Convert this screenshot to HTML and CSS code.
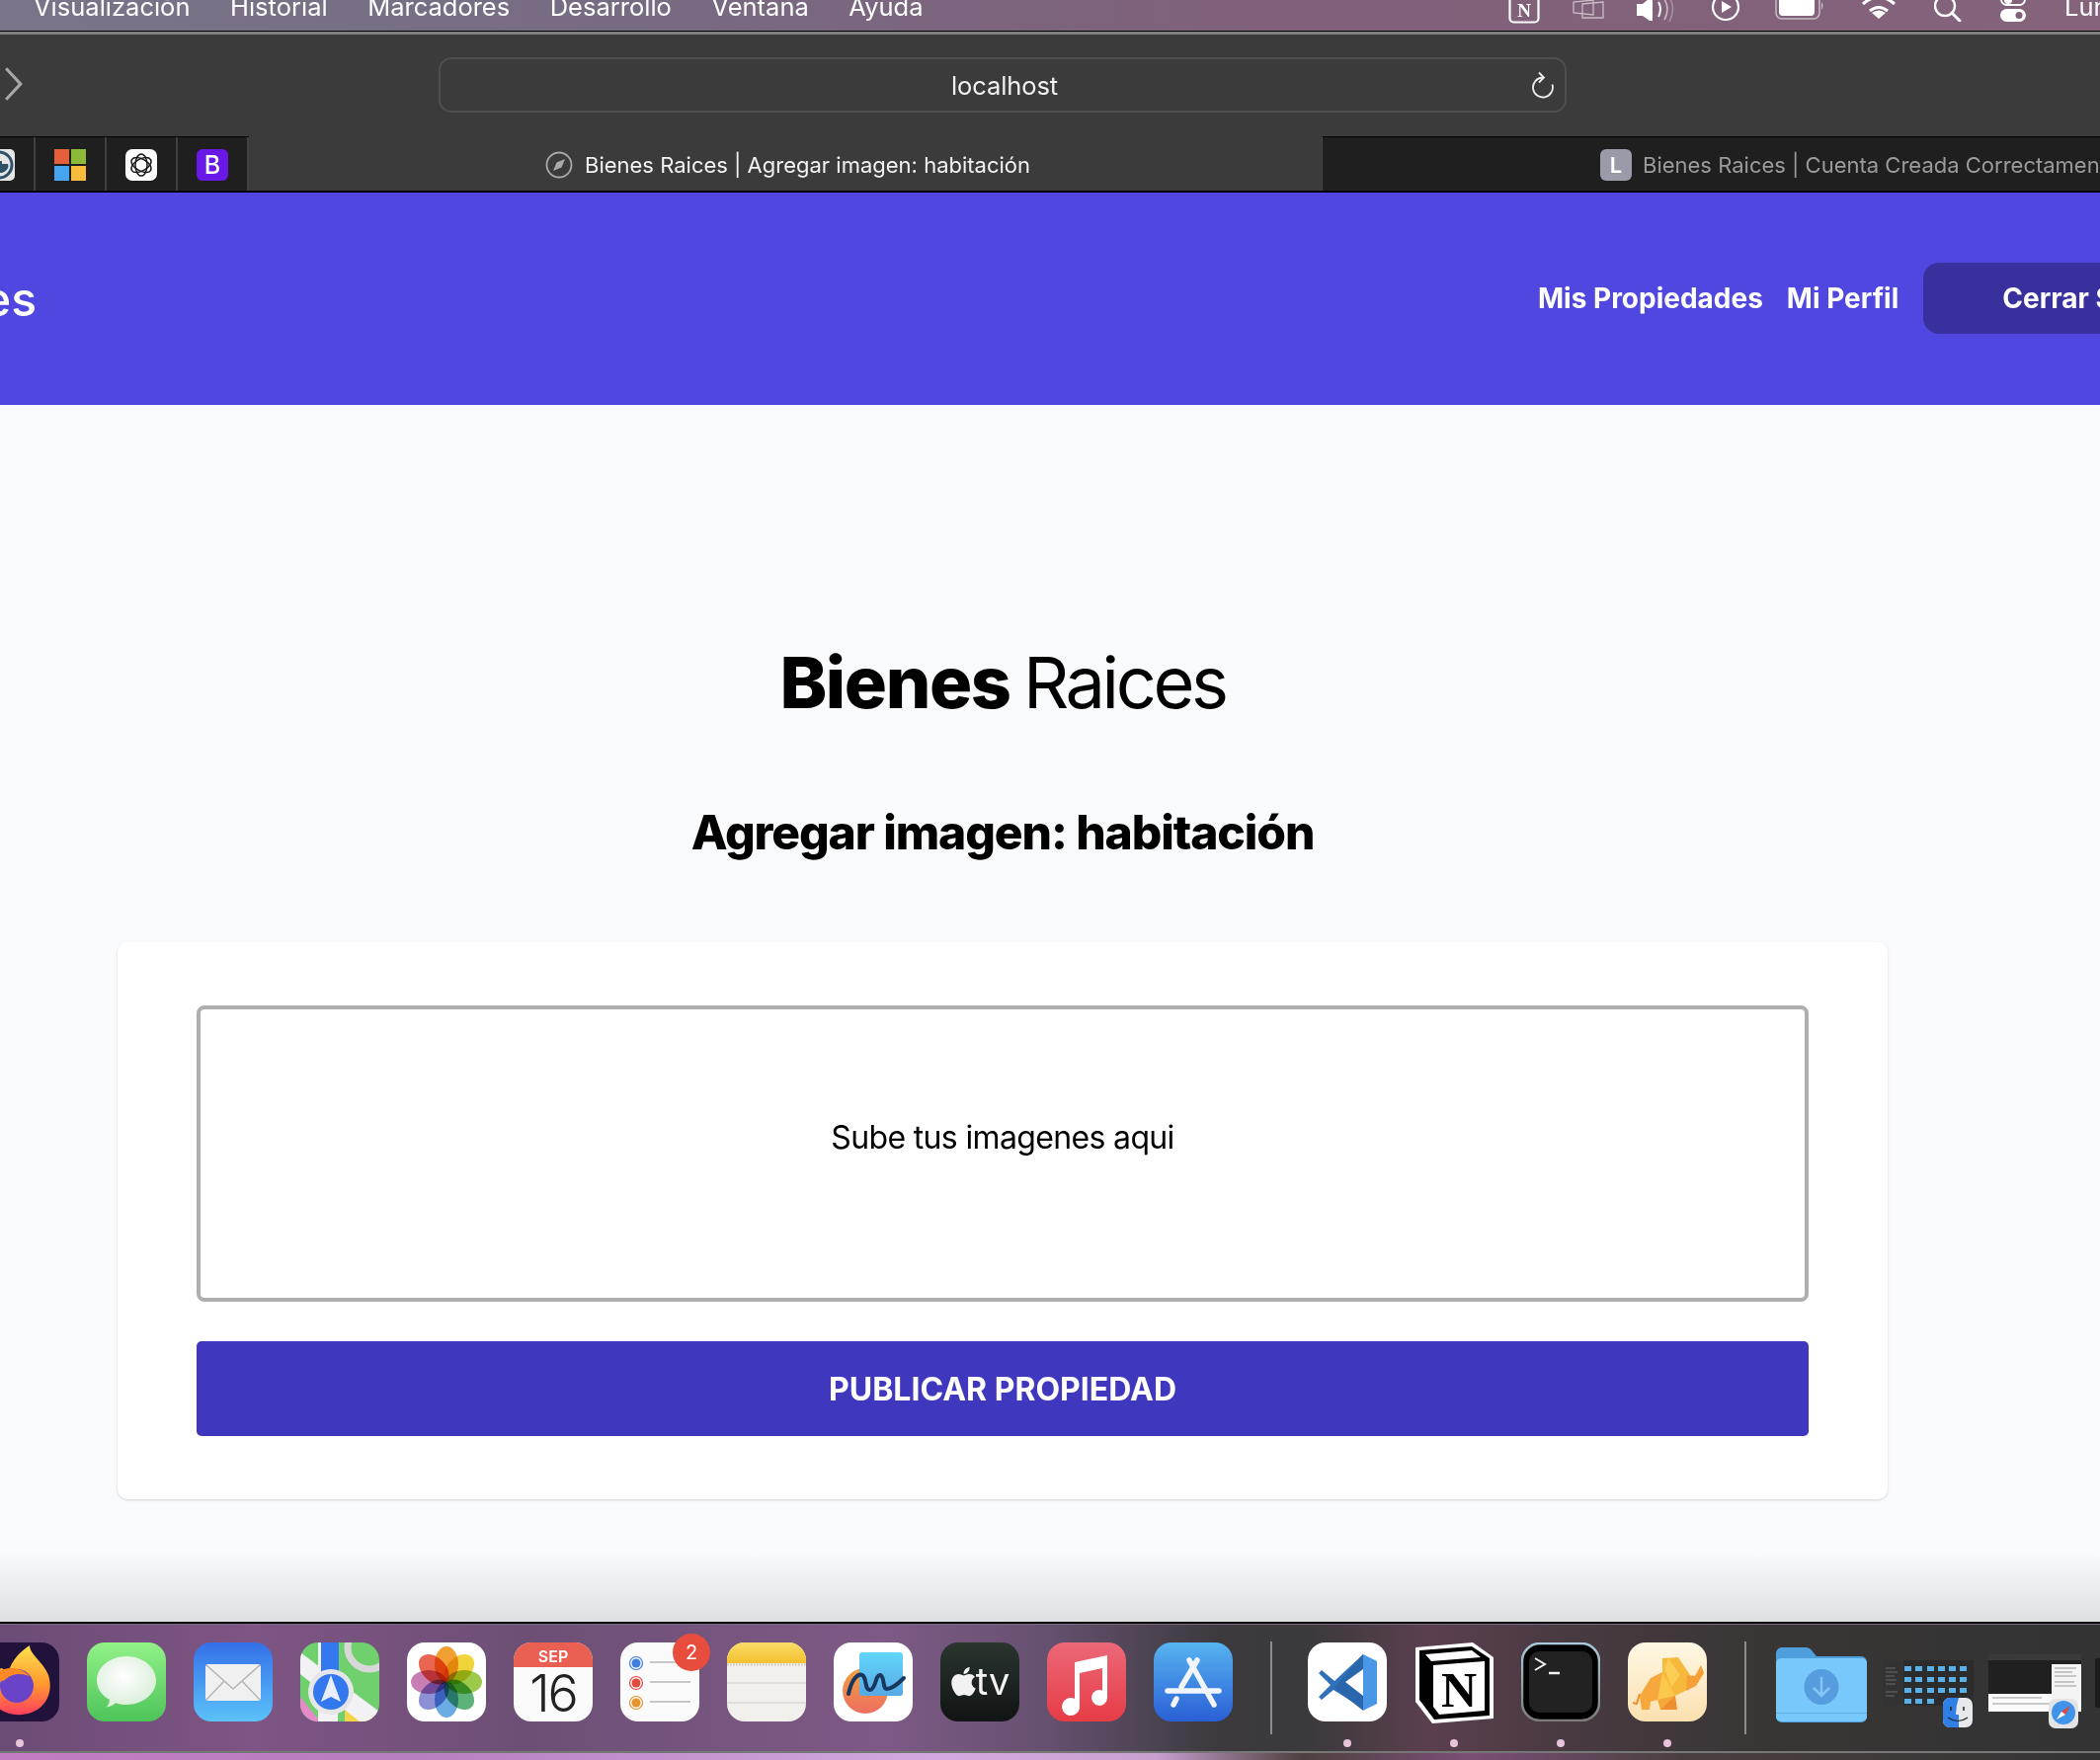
FILE: index.html
```html
<!DOCTYPE html>
<html lang="es">
<head>
<meta charset="utf-8">
<title>Bienes Raices | Agregar imagen: habitación</title>
<link rel="stylesheet" href="styles.css">
</head>
<body>
<div class="screen">
  <div class="menubar">
    <nav class="menu-left">
      <span>Visualización</span><span>Historial</span><span>Marcadores</span><span>Desarrollo</span><span>Ventana</span><span>Ayuda</span>
    </nav>
    <div class="menu-right">
      <svg class="mi mi-n" viewBox="0 0 32 24"><rect x="1.5" y="-8" width="29" height="30.500" rx="4" fill="none" stroke="#fff" stroke-width="2.200"/><text x="16" y="17" text-anchor="middle" class="mi-n-text">N</text></svg>
      <svg class="mi mi-win" viewBox="0 0 32 20"><g fill="none" stroke="#c9bcc5" stroke-width="1.300"><path d="M1 2v11l20 2V0z"/><path d="M10 4l21-2v16l-21 0z"/></g></svg>
      <svg class="mi mi-vol" viewBox="0 0 40 22"><path d="M1 4h6l7-6h3v23h-3l-7-5H1z" fill="#fff"/><path d="M23 2q4 7 0 15" fill="none" stroke="#fff" stroke-width="2"/><path d="M29-1q6 10 0 21" fill="none" stroke="#c9bcc5" stroke-width="1.600"/><path d="M34-3q7 12 0 25" fill="none" stroke="#a68fa0" stroke-width="1.600"/></svg>
      <svg class="mi mi-play" viewBox="0 0 30 22"><circle cx="15" cy="7" r="13" fill="none" stroke="#fff" stroke-width="2.200"/><path d="M11 1l10 6-10 6z" fill="#fff"/></svg>
      <svg class="mi mi-bat" viewBox="0 0 50 20"><rect x="1" y="-8" width="44" height="27" rx="6" fill="none" stroke="#c9bcc5" stroke-width="1.500"/><rect x="4" y="-6" width="36" height="22" rx="4" fill="#fff"/><path d="M47 2q3 4 0 8z" fill="#c9bcc5"/></svg>
      <svg class="mi mi-wifi" viewBox="0 0 34 20"><path d="M1 4q16-14 32 0M8 11q9-7 18 0" fill="none" stroke="#fff" stroke-width="3"/><path d="M17 19l-7-6q7-5 14 0z" fill="#fff"/></svg>
      <svg class="mi mi-search" viewBox="0 0 28 22"><circle cx="11" cy="6" r="10" fill="none" stroke="#fff" stroke-width="2.400"/><path d="M18 13l8 8" stroke="#fff" stroke-width="3" stroke-linecap="round"/></svg>
      <svg class="mi mi-ctl" viewBox="0 0 28 22"><rect x="2" y="-6" width="24" height="11" rx="5.500" fill="none" stroke="#fff" stroke-width="2"/><circle cx="9" cy="0" r="4" fill="#fff"/><rect x="1" y="9" width="26" height="13" rx="6.500" fill="#fff"/><circle cx="20" cy="15.500" r="3.500" fill="#806079"/></svg>
      <span class="menu-clock">Lun</span>
    </div>
  </div>

  <div class="toolbar">
    <svg class="chevron" viewBox="0 0 16 30"><path d="M1 1l13 14L1 29" fill="none" stroke="#a8a8a8" stroke-width="2.800"/></svg>
    <div class="address">
      <span class="address-text">localhost</span>
      <svg class="reload" viewBox="0 0 24 28"><path d="M12 6.500A10 10 0 1 0 21.500 13.500" fill="none" stroke="#ededed" stroke-width="1.800"/><path d="M8 1.500l5 5-5 5" fill="none" stroke="#ededed" stroke-width="1.800"/></svg>
    </div>
  </div>

  <div class="tabs">
    <div class="pinned">
      <div class="pin pin-first">
        <svg class="fav" viewBox="0 0 32 32"><rect width="32" height="32" rx="5" fill="#e6e6e6"/><circle cx="16" cy="16" r="13" fill="none" stroke="#2f5168" stroke-width="3"/><path d="M5 15h20q2 6-6 9H9q-4-3-4-9z" fill="#2f5168"/><path d="M9 12h10v3H9z" fill="#2f5168"/></svg>
      </div>
      <div class="pin">
        <svg class="fav" viewBox="0 0 32 32"><rect width="15" height="15" fill="#e4603a"/><rect x="17" width="15" height="15" fill="#8cba38"/><rect y="17" width="15" height="15" fill="#46a5ee"/><rect x="17" y="17" width="15" height="15" fill="#f8bc3c"/></svg>
      </div>
      <div class="pin">
        <svg class="fav" viewBox="0 0 32 32"><rect width="32" height="32" rx="7" fill="#fff"/><g fill="none" stroke="#1c1c1c" stroke-width="1.500"><ellipse cx="16" cy="16" rx="6" ry="11"/><ellipse cx="16" cy="16" rx="6" ry="11" transform="rotate(60 16 16)"/><ellipse cx="16" cy="16" rx="6" ry="11" transform="rotate(120 16 16)"/></g></svg>
      </div>
      <div class="pin">
        <svg class="fav" viewBox="0 0 32 32"><rect width="32" height="32" rx="6" fill="#6a18e8"/><text x="16" y="25" text-anchor="middle" class="fav-b">B</text></svg>
      </div>
    </div>
    <div class="tab tab-active">
      <svg class="compass" viewBox="0 0 28 28"><circle cx="14" cy="14" r="12.500" fill="none" stroke="#a9a9a9" stroke-width="1.800"/><path d="M20 8l-3.500 8.500L8 20l3.500-8.500z" fill="#a9a9a9"/></svg>
      <span>Bienes Raices | Agregar imagen: habitación</span>
    </div>
    <div class="tab tab-other">
      <span class="tab-letter">L</span>
      <span class="tab-other-title">Bienes Raices | Cuenta Creada Correctamente</span>
    </div>
  </div>

  <header class="site-header">
    <div class="logo"><a>Bienes Raices</a></div>
    <nav class="site-nav">
      <a>Mis Propiedades</a>
      <a>Mi Perfil</a>
      <button class="logout" type="button">Cerrar Sesión</button>
    </nav>
  </header>

  <main class="page">
    <h1 class="brand"><strong>Bienes</strong> <span class="brand-light">Raices</span></h1>
    <h2 class="subtitle">Agregar imagen: habitación</h2>
    <section class="card">
      <div class="dropzone"><p>Sube tus imagenes aqui</p></div>
      <button class="publish" type="button">PUBLICAR PROPIEDAD</button>
    </section>
  </main>

  <footer class="dock">
    <div class="dock-item running">
      <svg class="icon" viewBox="0 0 80 80"><defs><linearGradient id="ffo" x1="0" y1="0" x2="0" y2="1"><stop offset="0" stop-color="#ffe14d"/><stop offset=".55" stop-color="#ff9a2e"/><stop offset="1" stop-color="#ff3f5e"/></linearGradient></defs><rect width="80" height="80" rx="18" fill="#20123a"/><path d="M50 3c0 9 14 17 19 30 6 19-4 38-27 40C22 75 6 60 4 42c4-9 10-14 18-16l6 5C33 16 40 10 50 3z" fill="url(#ffo)"/><circle cx="37" cy="44" r="17" fill="#6a44c8"/><path d="M22 28c9-4 20-2 28 6-8-3-18-3-24 3-3 3-8 2-14 4 1-6 5-11 10-13z" fill="#ff8a23"/></svg>
    </div>
    <div class="dock-item">
      <svg class="icon" viewBox="0 0 80 80"><defs><linearGradient id="msg" x1="0" y1="0" x2="0" y2="1"><stop offset="0" stop-color="#92f288"/><stop offset="1" stop-color="#4dc45a"/></linearGradient><radialGradient id="msgb" cx=".45" cy=".4" r=".7"><stop offset="0" stop-color="#fff"/><stop offset="1" stop-color="#d4ecd4"/></radialGradient></defs><rect width="80" height="80" rx="18" fill="url(#msg)"/><path d="M40 14c16.500 0 30 11 30 24.500S56.500 63 40 63c-4 0-8-.6-11-1.800-3 2.500-6 4-9.500 4.300 2-2 3.200-4.500 3.500-7.800C15 54 10 46.500 10 38.500 10 25 23.500 14 40 14z" fill="url(#msgb)"/></svg>
    </div>
    <div class="dock-item">
      <svg class="icon" viewBox="0 0 80 80"><defs><linearGradient id="mail" x1="0" y1="0" x2="0" y2="1"><stop offset="0" stop-color="#3470e8"/><stop offset="1" stop-color="#5cc2fa"/></linearGradient></defs><rect width="80" height="80" rx="18" fill="url(#mail)"/><rect x="12" y="22" width="56" height="37" rx="3" fill="#f0f0f0"/><path d="M13 23l27 24 27-24M13 58l18-19M67 58L49 39" fill="none" stroke="#b5b5b5" stroke-width="1.500"/></svg>
    </div>
    <div class="dock-item">
      <svg class="icon" viewBox="0 0 80 80"><defs><clipPath id="mapc"><rect width="80" height="80" rx="18"/></clipPath></defs><g clip-path="url(#mapc)"><rect width="80" height="80" fill="#6fd06d"/><path d="M0 80V55l20 25z" fill="#e68ac8"/><path d="M45 80V60l35 20z" fill="#f6d44a"/><path d="M0 10l80 60v10H60L0 32z" fill="#f2f2f4"/><rect x="18" width="20" height="80" fill="#f2f2f4"/><rect x="21" width="18" height="35" fill="#3478f0"/><circle cx="70" cy="5" r="22" fill="none" stroke="#d8d8d8" stroke-width="7"/><circle cx="31" cy="50" r="23" fill="#e6e6ea"/><circle cx="31" cy="50" r="18" fill="#3478f0"/><path d="M31 33l10 27-10-5-10 5z" fill="#e8eefc"/></g></svg>
    </div>
    <div class="dock-item">
      <svg class="icon" viewBox="0 0 80 80"><rect width="80" height="80" rx="18" fill="#fff"/><g class="petals" transform="translate(40 40)"><ellipse rx="12" ry="18" cy="-18" fill="#f2a033"/><ellipse rx="12" ry="18" cy="-18" fill="#f0d53a" transform="rotate(45)"/><ellipse rx="12" ry="18" cy="-18" fill="#9cc94a" transform="rotate(90)"/><ellipse rx="12" ry="18" cy="-18" fill="#5cb278" transform="rotate(135)"/><ellipse rx="12" ry="18" cy="-18" fill="#6cacE4" transform="rotate(180)"/><ellipse rx="12" ry="18" cy="-18" fill="#8d90d4" transform="rotate(225)"/><ellipse rx="12" ry="18" cy="-18" fill="#c87eb2" transform="rotate(270)"/><ellipse rx="12" ry="18" cy="-18" fill="#ea6650" transform="rotate(315)"/></g></svg>
    </div>
    <div class="dock-item">
      <svg class="icon" viewBox="0 0 80 80"><defs><clipPath id="calc"><rect width="80" height="80" rx="18"/></clipPath></defs><g clip-path="url(#calc)"><rect width="80" height="80" fill="#fafafa"/><rect width="80" height="25" fill="#e95f52"/></g><text x="40" y="20" text-anchor="middle" class="cal-mon">SEP</text><text x="40" y="70" text-anchor="middle" class="cal-day">16</text></svg>
    </div>
    <div class="dock-item">
      <svg class="icon overflow" viewBox="0 0 80 80"><rect width="80" height="80" rx="18" fill="#fafafa"/><g fill="none" stroke-width="1.200"><circle cx="16" cy="21" r="6.500" stroke="#3f7ee0"/><circle cx="16" cy="41" r="6.500" stroke="#e24a3f"/><circle cx="16" cy="61" r="6.500" stroke="#e8942e"/></g><circle cx="16" cy="21" r="4.500" fill="#3f7ee0"/><circle cx="16" cy="41" r="4.500" fill="#e24a3f"/><circle cx="16" cy="61" r="4.500" fill="#e8942e"/><path d="M30 20h41M30 40h41M30 60h41" stroke="#c8c8c8" stroke-width="2"/><circle cx="72" cy="10" r="19" fill="#e84c3d"/><text x="72" y="17" text-anchor="middle" class="badge-num">2</text></svg>
    </div>
    <div class="dock-item">
      <svg class="icon" viewBox="0 0 80 80"><defs><clipPath id="notec"><rect width="80" height="80" rx="18"/></clipPath><linearGradient id="notey" x1="0" y1="0" x2="0" y2="1"><stop offset="0" stop-color="#fadc68"/><stop offset="1" stop-color="#f4c12e"/></linearGradient></defs><g clip-path="url(#notec)"><rect width="80" height="80" fill="#f2f0ec"/><rect width="80" height="21" fill="url(#notey)"/><path d="M0 22.500h80" stroke="#c4c4c0" stroke-width="2" stroke-dasharray="1.500 1.500"/><path d="M0 41h80M0 61h80" stroke="#d8d6d4" stroke-width="1.500"/></g></svg>
    </div>
    <div class="dock-item">
      <svg class="icon" viewBox="0 0 80 80"><defs><linearGradient id="ffred" x1="0" y1="0" x2="0" y2="1"><stop offset="0" stop-color="#f0a040"/><stop offset="1" stop-color="#ee6e60"/></linearGradient><linearGradient id="ffblu" x1="0" y1="0" x2="0" y2="1"><stop offset="0" stop-color="#62d6fa"/><stop offset="1" stop-color="#58a8e4"/></linearGradient></defs><rect width="80" height="80" rx="18" fill="#fff"/><ellipse cx="32" cy="49" rx="23" ry="23" fill="url(#ffred)"/><rect x="26" y="10" width="44" height="44" rx="3" fill="url(#ffblu)"/><path d="M15 52C18 38 24 31 29 33c5 3 2 16 8 15 6-1 5-15 10-15 5 1 2 14 7 14 5 0 11-5 17-11" fill="none" stroke="#18375e" stroke-width="4" stroke-linecap="round"/></svg>
    </div>
    <div class="dock-item">
      <svg class="icon" viewBox="0 0 80 80"><defs><linearGradient id="tvg" x1="0" y1="0" x2="0" y2="1"><stop offset="0" stop-color="#2a352f"/><stop offset="1" stop-color="#101414"/></linearGradient></defs><rect width="80" height="80" rx="18" fill="url(#tvg)"/><path transform="translate(11 23) scale(.065)" fill="#f2f2f2" d="M318.7 268.700c-.2-36.700 16.400-64.400 50-84.800-18.800-26.900-47.200-41.700-84.700-44.600-35.500-2.800-74.300 20.700-88.500 20.700-15 0-49.400-19.700-76.400-19.700C63.300 141.200 4 184.800 4 273.500q0 39.300 14.400 81.200c12.800 36.700 59 126.700 107.200 125.200 25.200-.6 43-17.900 75.800-17.900 31.800 0 48.300 17.900 76.400 17.900 48.600-.7 90.400-82.500 102.600-119.300-65.200-30.700-61.700-90-61.700-91.900zm-56.600-164.200c27.300-32.400 24.800-61.900 24-72.500-24.100 1.400-52 16.400-67.900 34.900-17.500 19.800-27.800 44.300-25.600 71.900 26.100 2 49.900-11.400 69.500-34.300z"/><text x="53" y="53" text-anchor="middle" class="tv-text">tv</text></svg>
    </div>
    <div class="dock-item">
      <svg class="icon" viewBox="0 0 80 80"><defs><linearGradient id="mus" x1="0" y1="0" x2="0" y2="1"><stop offset="0" stop-color="#ec6878"/><stop offset="1" stop-color="#e63c46"/></linearGradient></defs><rect width="80" height="80" rx="18" fill="url(#mus)"/><path d="M28 20l33-7v43a8 8 0 1 1-5-7.500V26l-23 5v34a9 9 0 1 1-5-8z" fill="#fff"/></svg>
    </div>
    <div class="dock-item">
      <svg class="icon" viewBox="0 0 80 80"><defs><linearGradient id="app" x1="0" y1="0" x2="0" y2="1"><stop offset="0" stop-color="#56b4f0"/><stop offset="1" stop-color="#2a5fd6"/></linearGradient></defs><rect width="80" height="80" rx="18" fill="url(#app)"/><g fill="none" stroke="#f2f6fc" stroke-width="5.500" stroke-linecap="round"><path d="M36 18l25 45"/><path d="M44 18L28 45"/><path d="M14 49h52"/><path d="M20 63l3-6"/></g></svg>
    </div>
    <div class="dock-sep"></div>
    <div class="dock-item running">
      <svg class="icon" viewBox="0 0 80 80"><rect width="80" height="80" rx="18" fill="#fff"/><path d="M56 12l14 7v43l-14 7z" fill="#4a97e8"/><path d="M56 12L27 39 14 28l-3 3 12 12-12 12 3 3 12-10 30 19z" fill="#2f70b8"/><path d="M56 12v57L27 46l5-6z" fill="#2a66ac"/><path d="M56 27v27L38 40z" fill="#fff"/></svg>
    </div>
    <div class="dock-item running">
      <svg class="icon overflow" viewBox="0 0 80 80"><path d="M1 5L59 0l21 15v62l-62 5L1 60z" fill="#fff"/><path d="M5 8L58 4l18 12v58l-56 4L5 58z" fill="#000"/><path d="M11 12L58 8l9 7-50 4z" fill="#fff"/><path d="M19 23l52-4v50l-46 4-6-8z" fill="#fff"/><text x="45" y="65" text-anchor="middle" class="notion-n">N</text></svg>
    </div>
    <div class="dock-item running">
      <svg class="icon" viewBox="0 0 80 80"><defs><linearGradient id="termf" x1="0" y1="0" x2="0" y2="1"><stop offset="0" stop-color="#a9cbdc"/><stop offset="1" stop-color="#7c7c7c"/></linearGradient></defs><rect x="1" y="1" width="78" height="78" rx="18" fill="#000" stroke="url(#termf)" stroke-width="2.500"/><rect x="8" y="9" width="64" height="62" rx="10" fill="#222"/><path d="M14 16l10 6-10 6" fill="none" stroke="#f2f2f2" stroke-width="2"/><path d="M28 31h11" stroke="#f2f2f2" stroke-width="2.500"/></svg>
    </div>
    <div class="dock-item running">
      <svg class="icon" viewBox="0 0 80 80"><defs><linearGradient id="ele" x1="0" y1="0" x2="0" y2="1"><stop offset="0" stop-color="#fef8e4"/><stop offset="1" stop-color="#fbe0b0"/></linearGradient></defs><rect width="80" height="80" rx="18" fill="url(#ele)"/><path d="M35 16l16-1 12 18-3 15-12 6-13-18z" fill="#f7b93c"/><path d="M60 33l8 1 6-11 3 8-8 13-10 5z" fill="#f59f36"/><path d="M23 36l12-6 13 24-3 14H33l-3-10-7 2-1 8h-8l-2-14z" fill="#f6a83c"/><path d="M35 30l13 24-18 4z" fill="#fbc84e"/><path d="M41 16l12 17-9 12-7-19z" fill="#fbcd55"/><path d="M33 68l15-14 2 14z" fill="#ee8e2c"/><path d="M12 52l-3 10-4-1" fill="none" stroke="#ee8e2c" stroke-width="2"/></svg>
    </div>
    <div class="dock-sep"></div>
    <div class="dock-item dock-folder">
      <svg class="folder" viewBox="0 0 92 78"><path d="M0 8a6 6 0 0 1 6-6h24q4 0 6 3l5 6h45a6 6 0 0 1 6 6v55a6 6 0 0 1-6 6H6a6 6 0 0 1-6-6z" fill="#4e9fdc"/><rect y="13" width="92" height="64" rx="5" fill="#79c8fb"/><rect y="68" width="92" height="1" fill="#62aee4"/><ellipse cx="46" cy="42" rx="17.500" ry="18" fill="#559dde"/><path d="M46 32v19M38 43l8 8 8-8" fill="none" stroke="#86c6f5" stroke-width="2.500"/></svg>
    </div>
    <div class="dock-stack stack-finder">
      <svg class="thumb" viewBox="0 0 92 46"><rect width="92" height="46" fill="#2c2c2c"/><rect width="21" height="46" fill="#333"/><path d="M3 8h10M3 12h12M3 16h9M3 20h11M3 24h10M3 32h12M3 36h9" stroke="#6a6a6a" stroke-width="1"/><g fill="#5ab0e8"><rect x="22" y="6" width="7" height="5"/><rect x="33" y="6" width="7" height="5"/><rect x="45" y="6" width="7" height="5"/><rect x="56" y="6" width="7" height="5"/><rect x="67" y="6" width="7" height="5"/><rect x="78" y="6" width="7" height="5"/><rect x="22" y="17" width="7" height="5"/><rect x="33" y="17" width="7" height="5"/><rect x="45" y="17" width="7" height="5"/><rect x="56" y="17" width="7" height="5"/><rect x="67" y="17" width="7" height="5"/><rect x="78" y="17" width="7" height="5"/><rect x="22" y="28" width="7" height="5"/><rect x="33" y="28" width="7" height="5"/><rect x="45" y="28" width="7" height="5"/><rect x="56" y="28" width="7" height="5"/><rect x="67" y="28" width="7" height="5"/><rect x="78" y="28" width="7" height="5"/><rect x="22" y="39" width="7" height="5"/><rect x="33" y="39" width="7" height="5"/><rect x="45" y="39" width="7" height="5"/></g></svg>
      <svg class="stack-badge badge-finder" viewBox="0 0 30 30"><rect width="30" height="30" rx="7" fill="#e6e8ec"/><path d="M7 0h9q-3 8-3 17h3v13H7a7 7 0 0 1-7-7V7a7 7 0 0 1 7-7z" fill="#2f7fe6"/><path d="M8 9v4M21 9v4" stroke="#222" stroke-width="1.500"/><path d="M5 20q10 7 20 0" fill="none" stroke="#222" stroke-width="1.200"/></svg>
    </div>
    <div class="dock-stack stack-safari">
      <svg class="thumb" viewBox="0 0 94 58"><rect width="94" height="58" fill="#fafafa"/><rect width="94" height="40" fill="#202020"/><rect width="94" height="6" fill="#3a3a3a"/><rect x="64" y="10" width="30" height="38" fill="#f4f4f4"/><path d="M67 14h22M67 18h18M67 22h22M67 28h20M67 32h22M4 44h50M4 50h60" stroke="#999" stroke-width="1"/></svg>
      <svg class="stack-badge badge-safari" viewBox="0 0 30 30"><rect width="30" height="30" rx="7" fill="#e4e4e6"/><circle cx="15" cy="14" r="12" fill="#3f94ea"/><path d="M22 7l-5 9-4-3z" fill="#e8403a"/><path d="M8 21l5-8 4 3z" fill="#fff"/></svg>
    </div>
    <span class="dock-sliver" aria-hidden="true"></span>
  </footer>
  <div class="wallpaper"></div>
</div>
</body>
</html>
```

FILE: styles.css
```css
* { box-sizing: border-box; }
html, body { margin: 0; padding: 0; height: 100%; }
body { font-family: Inter, "Liberation Sans", sans-serif; background: #f9fafb; color: #000; }
.screen { width: 2126px; height: 1782px; display: flex; flex-direction: column; overflow: hidden; }

/* macOS menu bar */
.menubar {
  flex: none; height: 35px; display: flex; justify-content: space-between; overflow: hidden;
  background: linear-gradient(90deg, #7b7488 0%, #776b82 30%, #80607a 60%, #84637b 100%);
  border-bottom: 3px solid #808080;
  box-shadow: inset 0 -1px 0 #000;
  color: #fff; font-size: 25.5px; line-height: 14px;
}
.menu-left { display: flex; gap: 40.5px; padding-left: 34px; }
.menu-right { display: flex; align-items: flex-start; padding-right: 0; width: 620px; }
.mi { flex: none; display: block; }
.mi-n { width: 32px; height: 24px; margin-left: 21px; }
.mi-n-text { font: 700 19px "Liberation Serif", serif; fill: #fff; }
.mi-win { width: 32px; height: 20px; margin-left: 33px; }
.mi-vol { width: 40px; height: 22px; margin-left: 32px; }
.mi-play { width: 30px; height: 22px; margin-left: 36px; }
.mi-bat { width: 50px; height: 20px; margin-left: 35px; }
.mi-wifi { width: 34px; height: 20px; margin-left: 38px; }
.mi-search { width: 28px; height: 22px; margin-left: 39px; }
.mi-ctl { width: 28px; height: 22px; margin-left: 38px; }
.menu-clock { margin-left: 38px; flex: none; }

/* Browser chrome */
.toolbar {
  flex: none; height: 103px; background: #3b3b3b; display: flex; align-items: flex-start;
  padding-left: 5px;
}
.chevron { width: 18px; height: 34px; margin-top: 33px; flex: none; }
.address {
  flex: none; width: 1142px; height: 56px; margin: 23px 0 0 421px; border: 2px solid #4e4e4e; border-radius: 13px;
  display: flex; align-items: center; justify-content: space-between; padding: 0 10px 0 517px;
  color: #f0f0f0; font-size: 25.5px; letter-spacing: -.1px;
}
.reload { width: 24px; height: 28px; }

.tabs { flex: none; height: 57px; display: flex; background: #3b3b3b; border-bottom: 2px solid #000; color: #f2f2f2; font-size: 22px; }
.pinned { flex: none; width: 288px; display: flex; margin-left: -36px; border-top: 1px solid #000; background: #1f1f1f; }
.pin { flex: none; width: 72px; display: flex; align-items: center; justify-content: center; border-right: 2px solid #414141; padding-top: 2px; }
.fav { width: 32px; height: 32px; display: block; }
.fav-b { font: 500 25px Inter, sans-serif; fill: #fff; }
.tab { display: flex; align-items: center; white-space: nowrap; overflow: hidden; padding-top: 2px; }
.tab-active { flex: none; width: 1087px; padding-left: 300px; gap: 12px; border-right: 1px solid #444; }
.compass { width: 28px; height: 28px; flex: none; }
.tab-other { flex: 1; min-width: 0; background: #1f1f1f; border-top: 1px solid #000; padding-left: 281px; gap: 11px; color: #9b9b9b; }
.tab-letter {
  flex: none; width: 32px; height: 32px; border-radius: 6px; background: #9a9aa8; color: #fff;
  display: flex; align-items: center; justify-content: center; font-weight: 600;
}

/* Site header */
.site-header { flex: none; height: 215px; background: #4f47df; display: flex; justify-content: space-between; align-items: center; color: #fff; }
.logo { flex: none; width: 37px; overflow: hidden; display: flex; justify-content: flex-end; white-space: nowrap; font-size: 48px; font-weight: 450; padding-bottom: 1px; }
.logo a { flex: none; }
.site-nav { flex: none; width: 569px; display: flex; align-items: center; gap: 24px; overflow: hidden; font-size: 28px; font-weight: 700; white-space: nowrap; margin-top: -2px; }
.logout {
  flex: none; height: 72px; width: 260px; margin-left: 1px; padding: 0 0 0 80px; border: 0; border-radius: 16px 0 0 16px; text-align: left;
  background: #37309d; color: #fff; font: 700 28px Inter, sans-serif;
}

/* Page body */
.page {
  flex: 1; min-height: 0; padding: 251px 215px 0 119px;
  background: linear-gradient(180deg, #f9fafb calc(100% - 70px), #dfe0e2 100%);
}
.brand { margin: 0; text-align: center; font-size: 72px; line-height: 60px; font-weight: 400; word-spacing: -7px; }
.brand strong { font-weight: 800; letter-spacing: -1.4px; }
.brand-light { letter-spacing: -3.4px; }
.subtitle { margin: 92px 0 0; text-align: center; font-size: 48px; line-height: 60px; font-weight: 800; letter-spacing: -1.1px; }
.card {
  margin-top: 81px; padding: 64px 80px; height: 564px; background: #fff; border-radius: 10px;
  box-shadow: 0 1px 3px rgba(0,0,0,.1), 0 1px 2px rgba(0,0,0,.06);
}
.dropzone {
  height: 300px; border: 4px solid #aeaeae; border-radius: 8px; padding-top: 110px; text-align: center; font-size: 32px; line-height: 40px; letter-spacing: -.65px;
}
.dropzone p { margin: 0; }
.publish {
  display: block; width: 100%; height: 96px; margin-top: 40px; border: 0; border-radius: 5px;
  background: #3f37bd; color: #fff; font: 700 32px Inter, sans-serif;
}

/* Dock */
.dock {
  flex: none; height: 133px; display: flex; align-items: flex-start; gap: 28px; padding: 19px 0 0;
  border-top: 2px solid #000; border-bottom: 2px solid #777;
  box-shadow: inset 0 1px 0 #7a6a80;
  background: linear-gradient(90deg, #6b4c74 0%, #7e5584 12%, #6d4f75 25%, #7d5a85 42%, #65506f 50%, #3c3a3e 58%, #3a393b 62%, #5b3f50 68%, #4a3a42 74%, #383635 84%, #333 100%);
}
.dock-item { flex: none; width: 80px; height: 112px; }
.dock-item:first-child { margin-left: -20px; }
.icon { display: block; width: 80px; height: 80px; }
.overflow { overflow: visible; }
.running::after { content: ""; display: block; width: 8px; height: 8px; margin: 18px auto 0; border-radius: 50%; background: #e8c4dc; }
.dock-sep { flex: none; width: 2px; height: 94px; margin: -1px 8px 0 10px; background: #8f8a90; }
.dock-folder { width: 92px; margin: 0 -12px 0 -6px; padding-top: 3px; }
.folder { display: block; width: 92px; height: 78px; }
.dock-stack { flex: none; display: flex; flex-direction: column; align-items: flex-end; }
.stack-finder { width: 92px; padding-top: 18px; }
.stack-safari { width: 94px; margin-left: -13px; padding-top: 12px; }
.thumb { display: block; width: 100%; }
.stack-finder .thumb { height: 46px; }
.stack-safari .thumb { height: 58px; }
.stack-badge { width: 30px; height: 30px; display: block; margin-right: 1px; }
.badge-finder { margin-top: -8px; }
.badge-safari { margin-top: -13px; margin-right: 3px; }
.dock-sliver { flex: none; width: 6px; height: 50px; margin: 16px 0 0 -14px; background: #1d1d1d; }
.petals ellipse { mix-blend-mode: multiply; }
.cal-mon { font: 600 16px Inter, sans-serif; fill: #fff; }
.cal-day { font: 300 52px Inter, sans-serif; fill: #222; letter-spacing: -2px; }
.badge-num { font: 400 20px Inter, sans-serif; fill: #fff; }
.tv-text { font: 400 38px Inter, sans-serif; fill: #f2f2f2; }
.notion-n { font: 700 50px "Liberation Serif", serif; fill: #000; }
.wallpaper {
  flex: none; height: 7px;
  background: linear-gradient(90deg, #c27cc4 0%, #b77ec0 20%, #d2aadf 45%, #c8a0d0 55%, #4e4040 62%, #7a4f76 70%, #4a3f40 80%, #333 100%);
}
```
